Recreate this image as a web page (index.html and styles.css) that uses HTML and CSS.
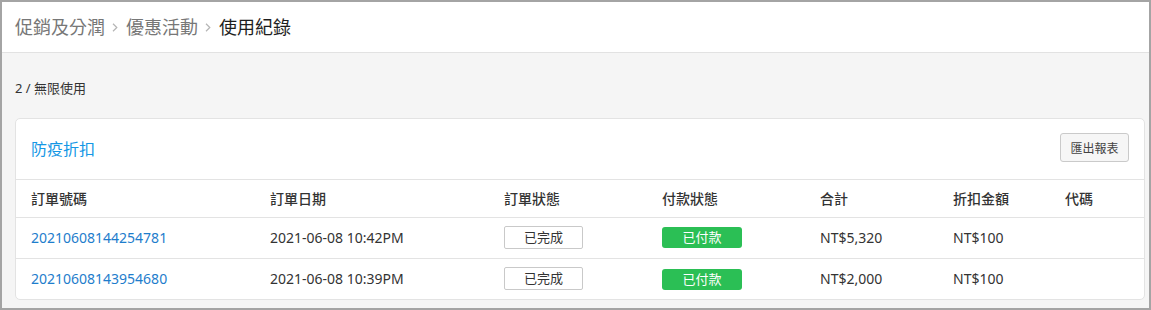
FILE: index.html
```html
<!DOCTYPE html>
<html lang="zh-Hant">
<head>
<meta charset="utf-8">
<title>使用紀錄</title>
<link rel="stylesheet" href="styles.css">
</head>
<body>
<div class="frame">
  <header class="topbar">
    <nav class="crumbs">
      <span class="crumb">促銷及分潤</span>
      <svg class="chev" width="6" height="9" viewBox="0 0 6 9"><path d="M1 0.8 L4.8 4.5 L1 8.2" fill="none" stroke="#b5b5b5" stroke-width="1.2"/></svg>
      <span class="crumb">優惠活動</span>
      <svg class="chev" width="6" height="9" viewBox="0 0 6 9"><path d="M1 0.8 L4.8 4.5 L1 8.2" fill="none" stroke="#b5b5b5" stroke-width="1.2"/></svg>
      <span class="crumb current">使用紀錄</span>
    </nav>
  </header>
  <main class="main">
    <div class="meta">2 / 無限使用</div>
    <section class="card">
      <div class="card-head">
        <h2 class="card-title">防疫折扣</h2>
        <button class="btn">匯出報表</button>
      </div>
      <table class="tbl">
        <colgroup>
          <col class="c1"><col class="c2"><col class="c3"><col class="c4"><col class="c5"><col class="c6"><col class="c7">
        </colgroup>
        <thead>
          <tr><th>訂單號碼</th><th>訂單日期</th><th>訂單狀態</th><th>付款狀態</th><th>合計</th><th>折扣金額</th><th class="code">代碼</th></tr>
        </thead>
        <tbody>
          <tr>
            <td><a class="link" href="#">20210608144254781</a></td>
            <td>2021-06-08 10:42PM</td>
            <td><span class="tag">已完成</span></td>
            <td><span class="tag paid">已付款</span></td>
            <td>NT$5,320</td>
            <td>NT$100</td>
            <td></td>
          </tr>
          <tr>
            <td><a class="link" href="#">20210608143954680</a></td>
            <td>2021-06-08 10:39PM</td>
            <td><span class="tag">已完成</span></td>
            <td><span class="tag paid">已付款</span></td>
            <td>NT$2,000</td>
            <td>NT$100</td>
            <td></td>
          </tr>
        </tbody>
      </table>
    </section>
  </main>
</div>
</body>
</html>
```

FILE: styles.css
```css
* { box-sizing: border-box; }
html, body { margin: 0; padding: 0; }
body {
  font-family: "Noto Sans", "Noto Sans CJK TC", sans-serif;
  color: #333;
  background: #f5f5f5;
}
.frame {
  width: 1151px;
  height: 310px;
  border: 2px solid #a4a4a4;
  background: #f5f5f5;
  overflow: hidden;
}
.topbar {
  height: 51px;
  background: #fff;
  border-bottom: 1px solid #e2e2e2;
  padding-left: 13px;
  display: flex;
  align-items: center;
}
.crumbs {
  display: flex;
  align-items: center;
  font-size: 18px;
  line-height: 24px;
}
.crumb { color: #777; }
.crumb.current { color: #1e1e1e; }
.chev { margin: 0 8px 0 7px; display: block; }
.main {
  padding: 0 4px 0 13px;
}
.meta {
  height: 65px;
  padding-top: 26px;
  font-size: 13px;
  line-height: 18px;
  color: #333;
}
.card {
  background: #fff;
  border: 1px solid #e3e3e3;
  border-radius: 5px;
  overflow: hidden;
}
.card-head {
  height: 61px;
  border-bottom: 1px solid #e3e3e3;
  display: flex;
  align-items: center;
  justify-content: space-between;
  padding: 0 15px 0 15px;
}
.card-title {
  margin: 0;
  font-size: 16px;
  font-weight: 400;
  color: #1597e5;
  line-height: 22px;
}
.btn {
  font-family: inherit;
  font-size: 12px;
  color: #444;
  height: 29px;
  width: 69px;
  padding: 0;
  background: #f6f6f6;
  border: 1px solid #cacaca;
  border-radius: 3px;
  margin-top: -3px;
}
.tbl {
  width: 100%;
  border-collapse: collapse;
  table-layout: fixed;
  font-size: 14px;
}
.c1 { width: 239px; }
.c2 { width: 234px; }
.c3 { width: 158px; }
.c4 { width: 158px; }
.c5 { width: 133px; }
.c6 { width: 112px; }
.tbl th {
  text-align: left;
  font-weight: 500;
  color: #333;
  height: 37px;
  padding: 0 0 0 15px;
  border-bottom: 1px solid #e3e3e3;
  font-size: 14px;
}
.tbl td {
  height: 41px;
  padding: 0 0 0 15px;
  border-bottom: 1px solid #e3e3e3;
  color: #333;
  white-space: nowrap;
}
.tbl tbody tr:last-child td { border-bottom: none; height: 41px; }
.link { color: #1e7dcc; text-decoration: none; }
.tag {
  display: inline-block;
  width: 79px;
  height: 23px;
  line-height: 21px;
  border: 1px solid #c9c9c9;
  border-radius: 2px;
  text-align: center;
  font-size: 13px;
  color: #333;
  vertical-align: middle;
}
.tag.paid {
  width: 80px;
  height: 21px;
  line-height: 21px;
  border: none;
  border-radius: 3px;
  background: #2bbf55;
  color: #fff;
}
```
